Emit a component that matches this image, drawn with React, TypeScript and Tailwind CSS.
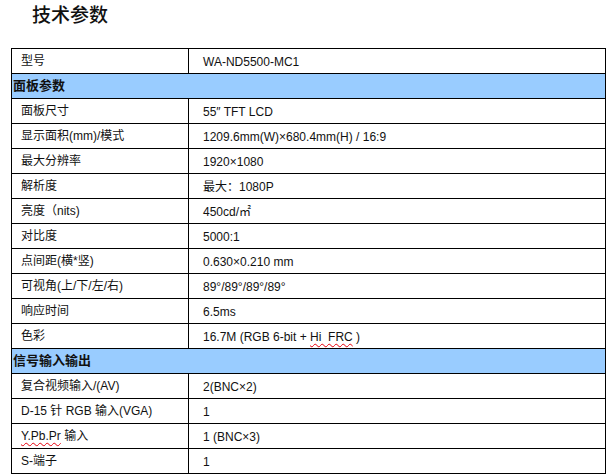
import React from "react"

type Row =
  | { kind: "section"; title: string }
  | { kind: "row"; label: React.ReactNode; value: React.ReactNode }

const squiggle = "underline decoration-wavy decoration-red-600 decoration-1 underline-offset-2"

const rows: Row[] = [
  { kind: "row", label: "型号", value: "WA-ND5500-MC1" },
  { kind: "section", title: "面板参数" },
  { kind: "row", label: "面板尺寸", value: "55″ TFT LCD" },
  { kind: "row", label: "显示面积(mm)/模式", value: "1209.6mm(W)×680.4mm(H) / 16:9" },
  { kind: "row", label: "最大分辨率", value: "1920×1080" },
  { kind: "row", label: "解析度", value: "最大：1080P" },
  { kind: "row", label: "亮度（nits)", value: "450cd/㎡" },
  { kind: "row", label: "对比度", value: "5000:1" },
  { kind: "row", label: "点间距(横*竖)", value: "0.630×0.210 mm" },
  { kind: "row", label: "可视角(上/下/左/右)", value: "89°/89°/89°/89°" },
  { kind: "row", label: "响应时间", value: "6.5ms" },
  {
    kind: "row",
    label: "色彩",
    value: (
      <>
        {"16.7M (RGB 6-bit + "}
        <span className={squiggle}>{"Hi\u00a0 FRC"}</span>
        {" )"}
      </>
    ),
  },
  { kind: "section", title: "信号输入输出" },
  { kind: "row", label: "复合视频输入/(AV)", value: "2(BNC×2)" },
  { kind: "row", label: "D-15 针 RGB 输入(VGA)", value: "1" },
  {
    kind: "row",
    label: (
      <>
        <span className={squiggle}>Y.Pb.Pr</span>
        {" 输入"}
      </>
    ),
    value: "1 (BNC×3)",
  },
  { kind: "row", label: "S-端子", value: "1" },
]

export default function App() {
  return (
    <div
      className="h-[476px] w-[613px] bg-white text-[#111]"
      style={{ fontFamily: '"Liberation Sans", "Noto Sans CJK SC", sans-serif' }}
    >
      <div className="h-[48px] pl-[32px] pt-[4px] text-[19px] font-medium leading-[24px]">
        技术参数
      </div>

      <div className="ml-[11px] w-[595px] border-l border-r border-t border-black text-[12px]">
        {rows.map((row, i) =>
          row.kind === "section" ? (
            <div
              key={i}
              className="flex h-[25px] items-center border-b border-black bg-[#99ccff] pl-[1px] text-[13px] font-bold"
            >
              {row.title}
            </div>
          ) : (
            <div key={i} className="flex h-[25px] border-b border-black">
              <div className="flex w-[177px] items-center whitespace-pre border-r border-black pl-[9px] pb-[1px]">
                {row.label}
              </div>
              <div className="flex flex-1 items-center whitespace-pre pl-[14px] pt-[2px]">{row.value}</div>
            </div>
          )
        )}
      </div>
    </div>
  )
}
